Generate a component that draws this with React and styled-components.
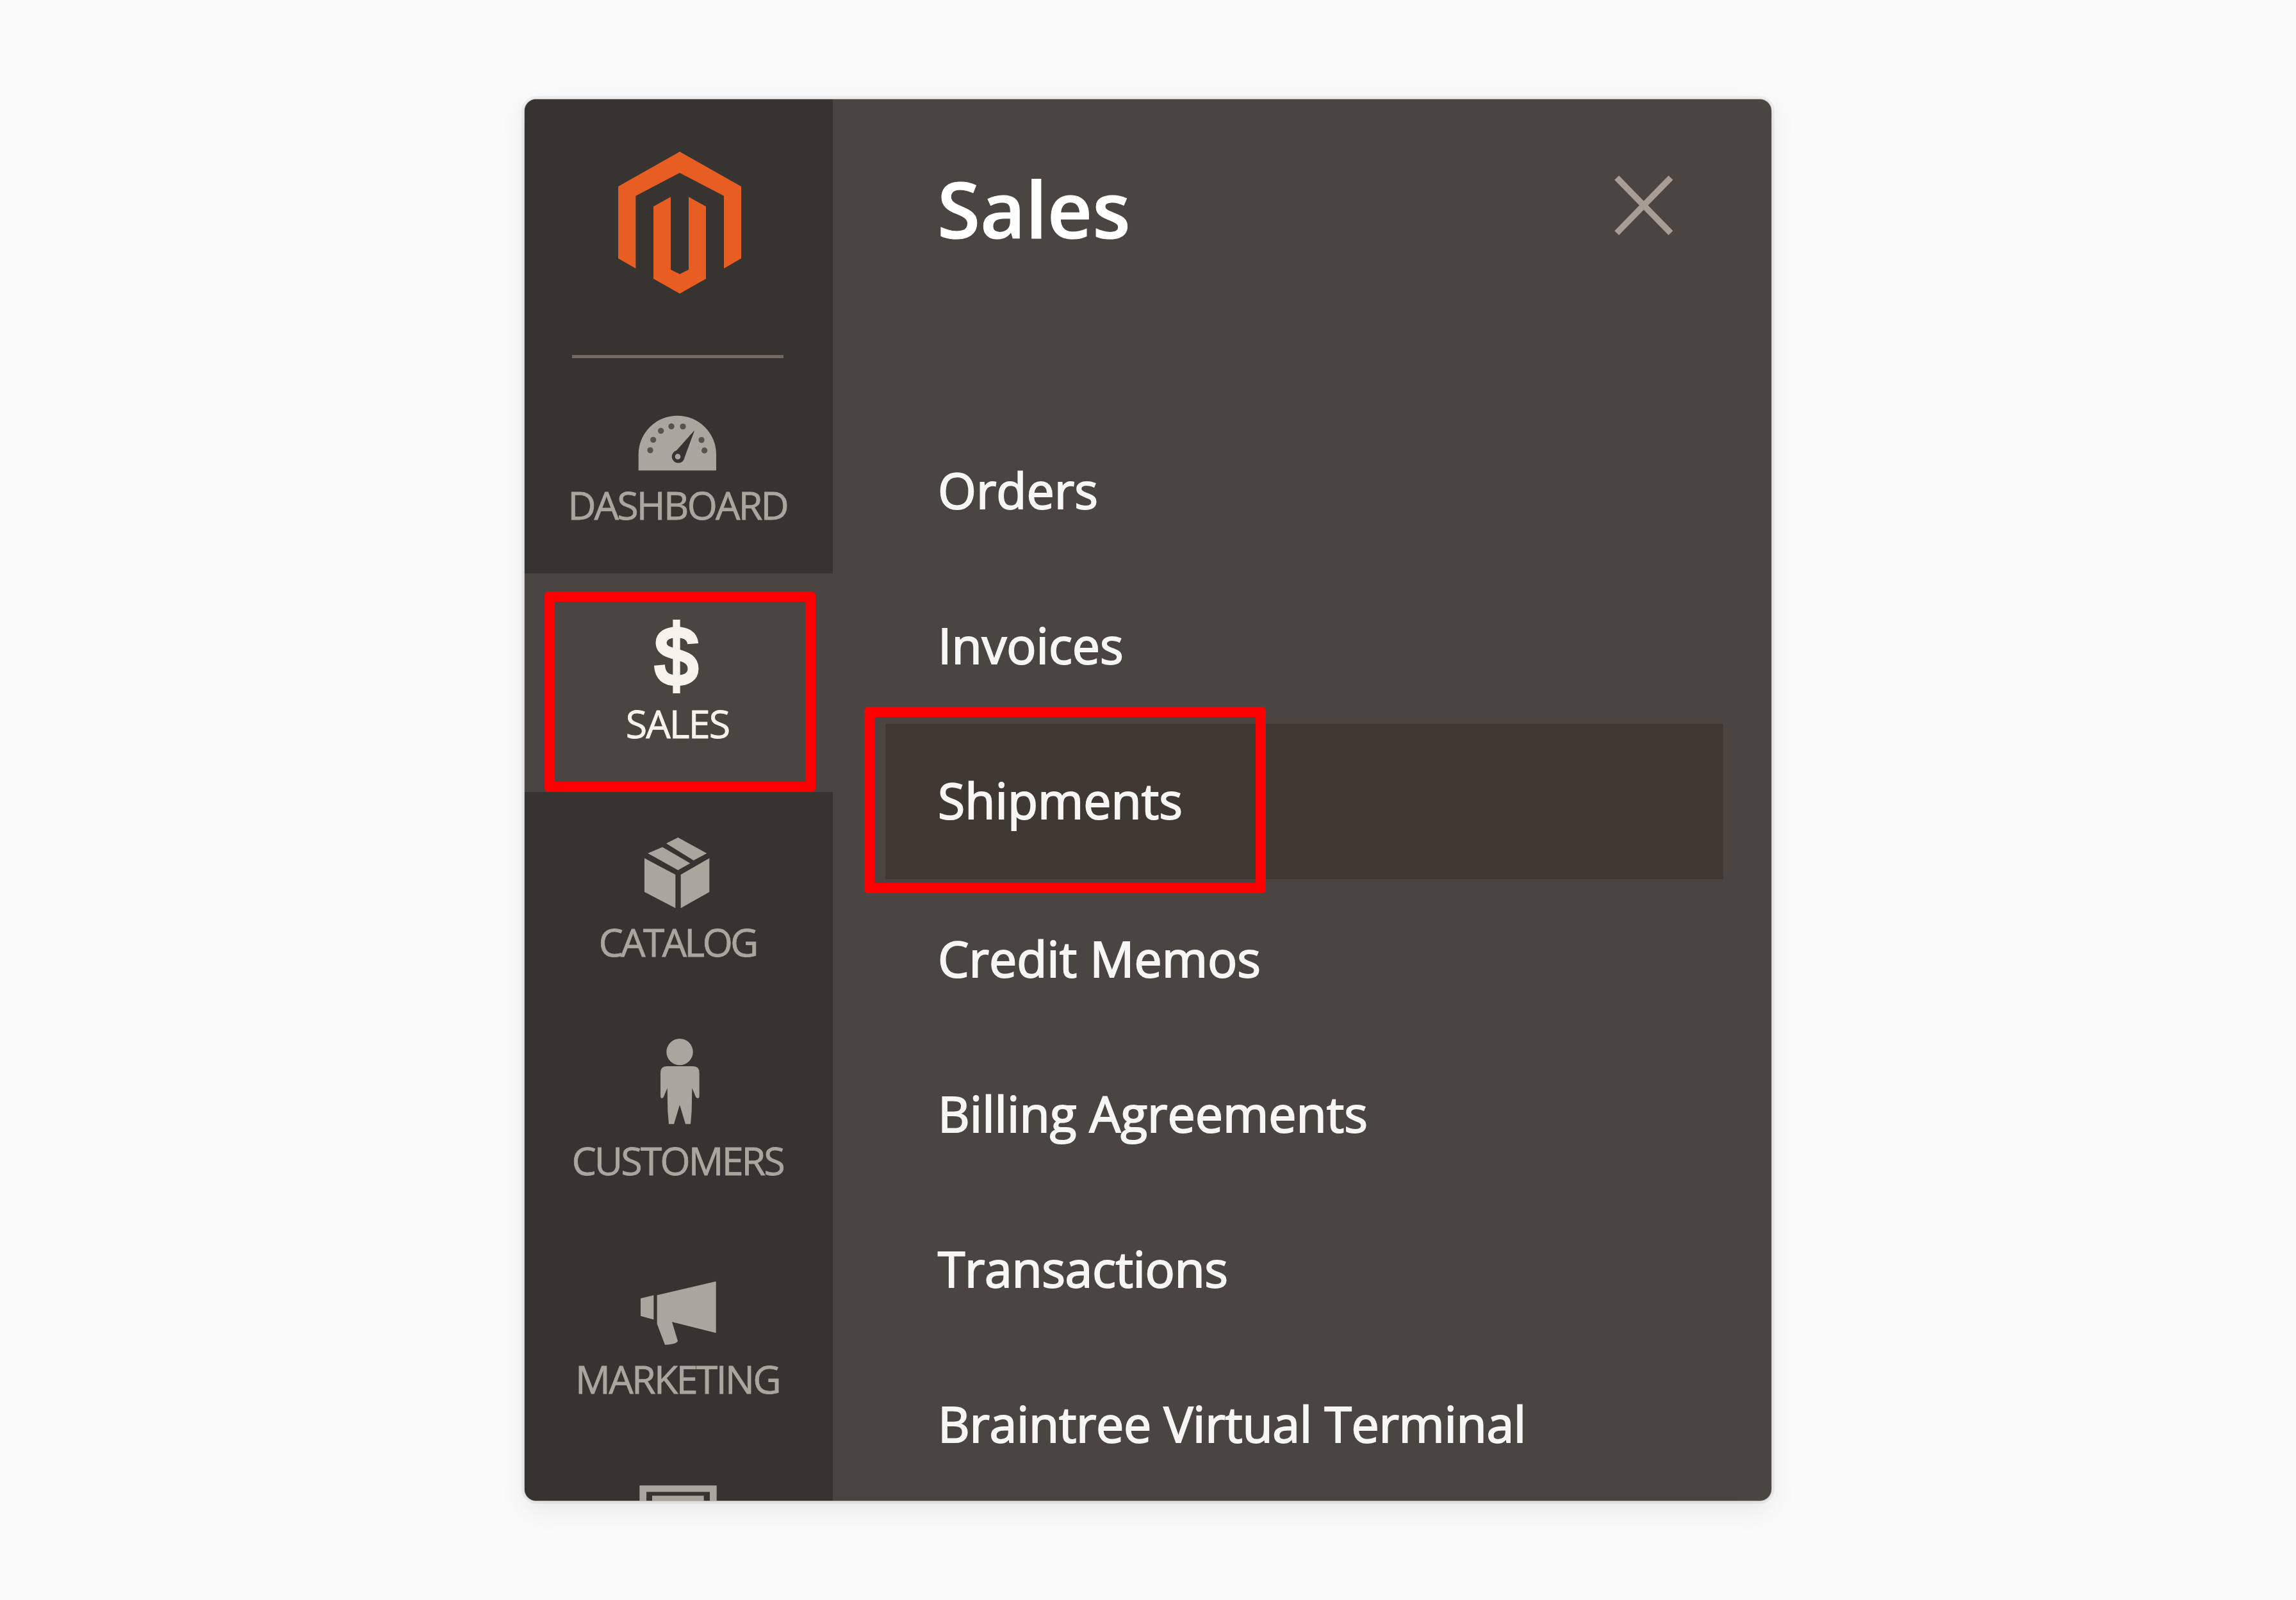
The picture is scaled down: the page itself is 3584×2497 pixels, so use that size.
import React from "react";
import styled, { createGlobalStyle } from "styled-components";

const GlobalStyle = createGlobalStyle`
  *, *::before, *::after { box-sizing: border-box; }
  body {
    margin: 0;
    background: #fafafa;
    font-family: "Open Sans", "Noto Sans", sans-serif;
  }
`;

const Page = styled.main`
  height: 2497px;
  padding: 155px 819px 0;
  overflow: hidden;
`;

const Card = styled.div`
  display: flex;
  width: 1946px;
  height: 2187px;
  border-radius: 18px;
  overflow: hidden;
  background: #4a4541;
  box-shadow: 0 0 0 1px rgba(0, 0, 0, 0.18), 0 0 0 5px rgba(0, 0, 0, 0.045),
    0 14px 40px rgba(0, 0, 0, 0.08);
`;

const Sidebar = styled.nav`
  flex: none;
  width: 481px;
  background: #373330;
`;

const Brand = styled.div`
  display: flex;
  justify-content: center;
  height: 399px;
  margin: 0 77px 0 74px;
  padding: 80px 0 0 5px;
`;

const Logo = styled.svg`
  width: 192px;
  height: 225px;
  fill: #e85d22;
`;

const Divider = styled.hr`
  width: 330px;
  height: 5px;
  margin: 0 0 -5px 74px;
  border: 0;
  background: #736963;
`;

const NavItem = styled.a`
  position: relative;
  display: flex;
  flex-direction: column;
  align-items: center;
  height: 341px;
  background: ${(p) => (p.$active ? "#4a4541" : "transparent")};
  color: ${(p) => (p.$active ? "#f7f3eb" : "#aaa69e")};
`;

const NavIcon = styled.svg`
  flex: none;
  width: 481px;
  height: 190px;
  fill: currentColor;
`;

const NavLabel = styled.span`
  padding-right: 4px;
  font-size: 61px;
  line-height: 88px;
  letter-spacing: ${(p) => p.$tracking}px;
  white-space: nowrap;
  text-transform: uppercase;
  -webkit-text-stroke: 0.8px currentColor;
`;

const Marker = styled.div`
  position: absolute;
  z-index: 1;
  border: 16.5px solid #ff0000;
  border-radius: 6px;
  pointer-events: none;
`;

const NavMarker = styled(Marker)`
  left: 31px;
  top: 28px;
  width: 423px;
  height: 313px;
`;

const RowMarker = styled(Marker)`
  left: -33px;
  top: -27px;
  width: 627px;
  height: 291px;
`;

const Panel = styled.section`
  flex: 1;
  padding: 0 75px 0 82px;
`;

const PanelHeader = styled.header`
  display: flex;
  justify-content: space-between;
  align-items: flex-start;
  height: 491px;
  padding: 101px 75px 0 81px;
`;

const Title = styled.h1`
  margin: 0;
  color: #ffffff;
  font-size: 122px;
  font-weight: 600;
  line-height: 139px;
  -webkit-text-stroke: 1px currentColor;
`;

const CloseButton = styled.button`
  width: 100px;
  height: 100px;
  margin: 13px 0 0;
  padding: 0;
  border: 0;
  background: none;
  color: #a79d95;

  svg {
    display: block;
    width: 100%;
    height: 100%;
  }
`;

const Menu = styled.ul`
  margin: 0;
  padding: 0;
  list-style: none;
`;

const MenuRow = styled.li`
  position: relative;
  height: 242px;
  margin-bottom: ${(p) => (p.$active ? 5 : 0)}px;
  padding-left: 82px;
  background: ${(p) => (p.$active ? "#403833" : "transparent")};
  color: #f6f6f5;
  font-size: 77px;
  letter-spacing: ${(p) => p.$tracking || 0}px;
  line-height: 238px;
  white-space: nowrap;
  -webkit-text-stroke: 2px currentColor;
`;

const DashboardIcon = () => (
  <NavIcon viewBox="57 -141 1443 570">
    <path
      fillRule="evenodd"
      d="M590 400V325A182 182 0 0 1 954 325V400Z
         M853 211L768 306A30 30 0 1 0 806 338Z"
    />
    <circle cx="774" cy="335" r="13" />
    <g fill="#57534f">
      <circle cx="645" cy="305" r="14" />
      <circle cx="659" cy="256" r="14" />
      <circle cx="695" cy="214" r="14" />
      <circle cx="744" cy="193" r="14" />
      <circle cx="798" cy="194" r="14" />
      <circle cx="885" cy="257" r="14" />
      <circle cx="899" cy="306" r="14" />
    </g>
  </NavIcon>
);

const SalesIcon = () => (
  <NavIcon viewBox="57 42 1443 570">
    <g fill="none" stroke="currentColor">
      <path
        strokeWidth="51"
        d="M845 371C842 334 814 317 769 317C724 317 696 336 696 366
           C696 401 728 410 769 421C815 433 846 447 846 488
           C846 524 816 543 769 543C720 543 692 524 688 471"
      />
      <path strokeWidth="34" d="M768 258V603" />
    </g>
  </NavIcon>
);

const CatalogIcon = () => (
  <NavIcon viewBox="57 -75 1443 570">
    <path
      d="M775 138L910 212L848 245L720 166Z
         M702 183L832 259L775 291L634 212Z
         M618 235L763 312V469L618 393Z
         M922 235L788 312V469L922 393Z"
    />
  </NavIcon>
);

const CustomersIcon = () => (
  <NavIcon viewBox="57 48 1443 570">
    <circle cx="783" cy="242" r="62" />
    <path
      d="M722 309H846Q875 309 875 340V448Q875 459 867 459Q860 459 857 450
         L841 411L839 520L834 580H810L783 490L756 580H732L727 520L725 411
         L709 450Q706 459 700 459Q693 459 693 448V340Q693 309 722 309Z"
    />
  </NavIcon>
);

const MarketingIcon = () => (
  <NavIcon viewBox="57 -69 1443 570">
    <path
      d="M600 256L661 241V355L600 338Z
         M677 241L953 176V418L747 366L774 455Q770 470 714 473L677 376Z"
    />
  </NavIcon>
);

const ContentIcon = () => (
  <NavIcon viewBox="57 954 1443 570">
    <path
      fillRule="evenodd"
      d="M595 1132H956V1420H595Z M627 1162V1390H924V1162Z"
    />
    <path d="M654 1180H896V1370H654Z" />
  </NavIcon>
);

const navItems = [
  { label: "Dashboard", icon: DashboardIcon, tracking: -2.9 },
  { label: "Sales", icon: SalesIcon, tracking: -1.9, active: true },
  { label: "Catalog", icon: CatalogIcon, tracking: -3.8 },
  { label: "Customers", icon: CustomersIcon, tracking: -3 },
  { label: "Marketing", icon: MarketingIcon, tracking: -2.7 },
  { label: "", icon: ContentIcon, tracking: 0 },
];

const menuItems = [
  { label: "Orders" },
  { label: "Invoices" },
  { label: "Shipments", active: true },
  { label: "Credit Memos" },
  { label: "Billing Agreements" },
  { label: "Transactions", tracking: -0.4 },
  { label: "Braintree Virtual Terminal", tracking: -0.35 },
];

export default function App() {
  return (
    <Page>
      <GlobalStyle />
      <Card>
        <Sidebar>
          <Brand>
            <Logo viewBox="495 285 576 675">
              <path
                d="M783 290L1071 453V790L990 837V497L783 389L577 497V837L495 790V453Z
                   M741 502V842L783 863L825 842V502L906 547V885L783 955L660 885V547Z"
              />
            </Logo>
          </Brand>
          <Divider />
          {navItems.map(({ label, icon: Icon, tracking, active }, index) => (
            <NavItem key={index} $active={active}>
              <Icon />
              {label && <NavLabel $tracking={tracking}>{label}</NavLabel>}
              {active && <NavMarker />}
            </NavItem>
          ))}
        </Sidebar>
        <Panel>
          <PanelHeader>
            <Title>Sales</Title>
            <CloseButton aria-label="Close">
              <svg viewBox="345 385 300 300">
                <path
                  d="M371 410L624 669M624 410L371 669"
                  fill="none"
                  stroke="currentColor"
                  strokeWidth="29"
                />
              </svg>
            </CloseButton>
          </PanelHeader>
          <Menu>
            {menuItems.map(({ label, active, tracking }) => (
              <MenuRow key={label} $active={active} $tracking={tracking}>
                {label}
                {active && <RowMarker />}
              </MenuRow>
            ))}
          </Menu>
        </Panel>
      </Card>
    </Page>
  );
}
